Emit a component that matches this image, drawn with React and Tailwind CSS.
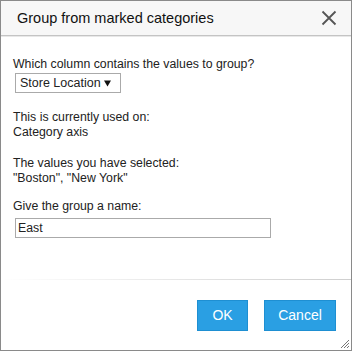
import React from 'react';

function App() {
  return (
    <div className="w-[352px] h-[351px] bg-white border border-[#8a8a8a] flex flex-col text-[12.3px] leading-[15px] text-[#222]" style={{ fontFamily: '"Liberation Sans", Arial, sans-serif' }}>
      {/* Header */}
      <div className="h-[35px] shrink-0 bg-[#f7f7f7] border-b border-[#c4c4c4] flex items-center justify-between pl-4 pr-[14px] shadow-[0_1px_0_#e8e8e8]">
        <span className="text-[14.5px] text-[#111]">Group from marked categories</span>
        <svg width="16" height="16" viewBox="0 0 16 16" className="text-[#555]">
          <path d="M1.5 1.5 L14.5 14.5 M14.5 1.5 L1.5 14.5" stroke="currentColor" strokeWidth="1.8" fill="none" />
        </svg>
      </div>

      {/* Body */}
      <div className="flex-1 pl-3 pt-[21px]">
        <div>Which column contains the values to group?</div>
        <div className="mt-px ml-[2px] w-[106px] h-[20px] border border-[#aaa] flex items-center justify-between pl-[4px] pr-[9px] whitespace-nowrap">
          <span className="text-[12.5px]">Store Location</span>
          <svg width="7" height="7" viewBox="0 0 7 7">
            <path d="M0 0.5 H7 L3.5 6.5 Z" fill="#111" />
          </svg>
        </div>

        <div className="mt-[17px]">This is currently used on:</div>
        <div>Category axis</div>

        <div className="mt-[16px]">The values you have selected:</div>
        <div>"Boston", "New York"</div>

        <div className="mt-[13px]">Give the group a name:</div>
        <div className="mt-[4px] ml-[2px] w-[256px] h-[20px] border border-[#aaa] flex items-center pl-[2px]">East</div>
      </div>

      {/* Footer */}
      <div className="h-px shrink-0 bg-gradient-to-r from-white to-[#cfcfcf]" />
      <div className="h-[70px] shrink-0 relative flex justify-end items-start gap-4 pt-5 pr-[15px]">
        <button className="w-[51px] h-[31px] bg-[#2a9fe3] border border-[#1e8fd2] text-white text-[14px]">OK</button>
        <button className="w-[72px] h-[31px] bg-[#2a9fe3] border border-[#1e8fd2] text-white text-[14px]">Cancel</button>
        <svg width="10" height="10" viewBox="0 0 10 10" className="absolute right-px bottom-px">
          <path d="M9 1 L1 9 M9 4 L4 9 M9 7 L7 9" stroke="#777" strokeWidth="1" fill="none" />
        </svg>
      </div>
    </div>
  );
}

export default App;
